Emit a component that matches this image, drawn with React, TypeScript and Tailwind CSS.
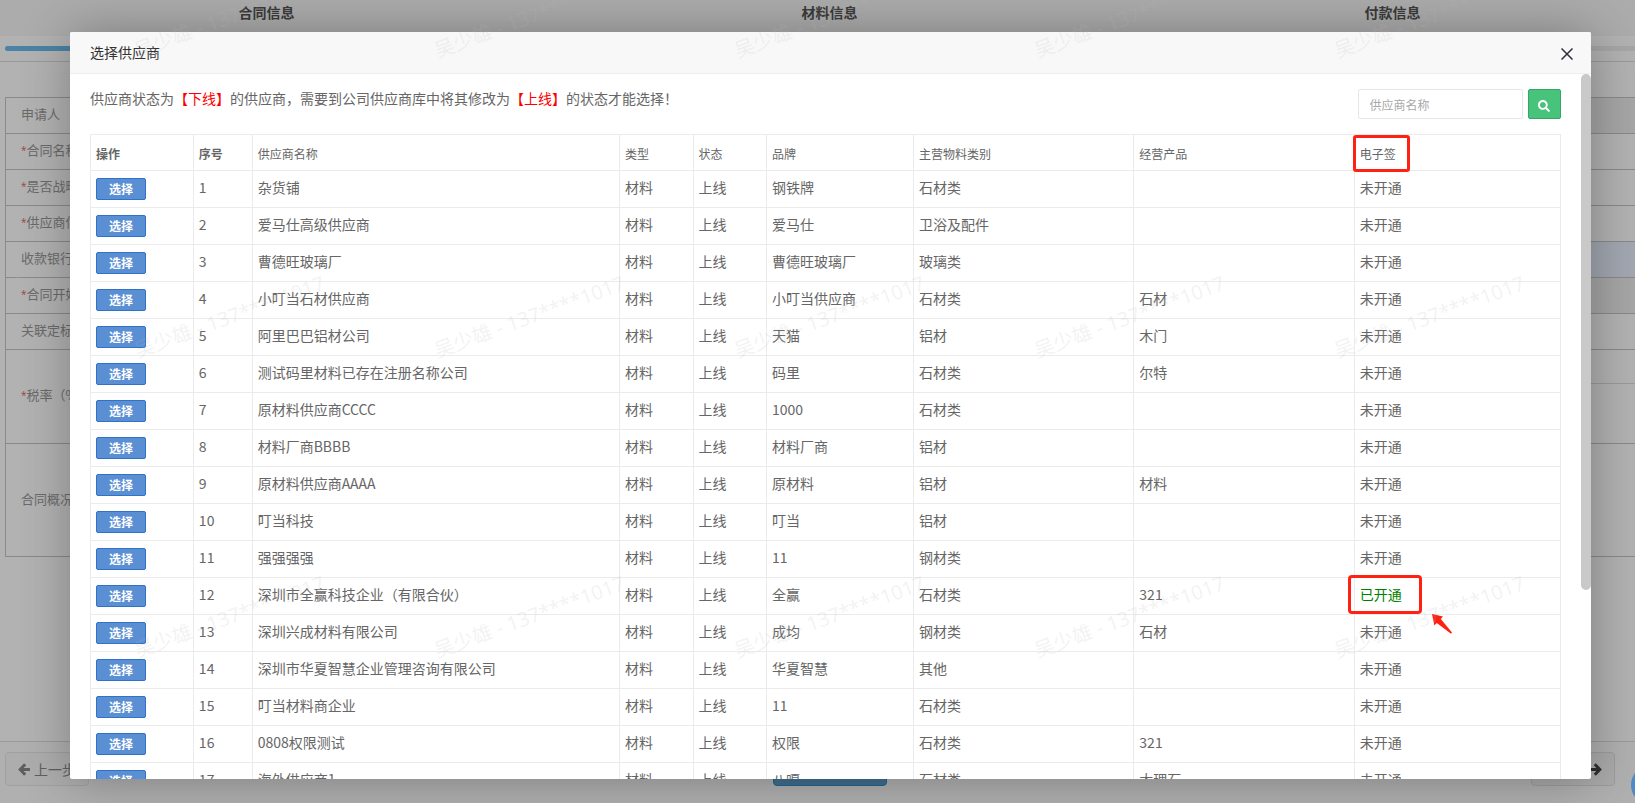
import { FaSearch } from "react-icons/fa";

const steps = ["合同信息", "材料信息", "付款信息"];

const fields = [
    { label: "申请人", required: false, row: "h-[36px]", input: "bg-[#eee]" },
    { label: "合同名称", required: true, row: "h-[36px]", input: "" },
    { label: "是否战略合同", required: true, row: "h-[36px]", input: "" },
    { label: "供应商信息", required: true, row: "h-[36px]", input: "" },
    { label: "收款银行", required: false, row: "h-[36px]", input: "bg-[#e8f0fe]" },
    { label: "合同开始时间", required: true, row: "h-[36px]", input: "bg-[#eee]" },
    { label: "关联定标", required: false, row: "h-[36px]", input: "" },
    { label: "税率（%）", required: true, row: "h-[94px]", input: "border-b border-[#ddd] mb-[59px]" },
    { label: "合同概况", required: false, row: "h-[113px]", input: "" },
];

const columns = [
    { title: "操作", width: "w-[7%]", bold: true },
    { title: "序号", width: "w-[4%]", bold: true },
    { title: "供应商名称", width: "w-[25%]" },
    { title: "类型", width: "w-[5%]" },
    { title: "状态", width: "w-[5%]" },
    { title: "品牌", width: "w-[10%]" },
    { title: "主营物料类别", width: "w-[15%]" },
    { title: "经营产品", width: "w-[15%]" },
    { title: "电子签", width: "w-[14%]", marked: true },
];

const suppliers = [
    { name: "杂货铺", brand: "钢铁牌", category: "石材类", product: "" },
    { name: "爱马仕高级供应商", brand: "爱马仕", category: "卫浴及配件", product: "" },
    { name: "曹德旺玻璃厂", brand: "曹德旺玻璃厂", category: "玻璃类", product: "" },
    { name: "小叮当石材供应商", brand: "小叮当供应商", category: "石材类", product: "石材" },
    { name: "阿里巴巴铝材公司", brand: "天猫", category: "铝材", product: "木门" },
    { name: "测试码里材料已存在注册名称公司", brand: "码里", category: "石材类", product: "尔特" },
    { name: "原材料供应商CCCC", brand: "1000", category: "石材类", product: "" },
    { name: "材料厂商BBBB", brand: "材料厂商", category: "铝材", product: "" },
    { name: "原材料供应商AAAA", brand: "原材料", category: "铝材", product: "材料" },
    { name: "叮当科技", brand: "叮当", category: "铝材", product: "" },
    { name: "强强强强", brand: "11", category: "钢材类", product: "" },
    { name: "深圳市全赢科技企业（有限合伙）", brand: "全赢", category: "石材类", product: "321", signed: true },
    { name: "深圳兴成材料有限公司", brand: "成均", category: "钢材类", product: "石材" },
    { name: "深圳市华夏智慧企业管理咨询有限公司", brand: "华夏智慧", category: "其他", product: "" },
    { name: "叮当材料商企业", brand: "11", category: "石材类", product: "" },
    { name: "0808权限测试", brand: "权限", category: "石材类", product: "321" },
    { name: "海外供应商1", brand: "八嘎", category: "石材类", product: "大理石" },
];

const cell = "border border-[#ebebeb] px-[5px]";
const textCell = cell + " pb-[5px]";

const ArrowIcon = ({ flip }: { flip?: boolean }) => (
    <svg
        className={"h-[13px] w-[12px] " + (flip ? "-scale-x-100" : "")}
        viewBox="0 0 12 13"
        fill="none"
        stroke="currentColor"
        strokeWidth="3"
    >
        <path d="M7.2 1.2 L2.2 6.5 L7.2 11.8 M2.2 6.5 H12" />
    </svg>
);

const ContractPage = () => {
    return (
        <div className="flex h-full flex-col bg-white">
            <div className="h-[62px] shrink-0 overflow-hidden border-b border-[#ddd]">
                <ol className="-ml-[15px] flex w-[103.3%]">
                    {steps.map((step) => (
                        <li
                            key={step}
                            className="w-1/3 bg-[#f7f7f7] pt-[2px] h-9 text-center text-sm font-bold text-[#555]"
                        >
                            {step}
                        </li>
                    ))}
                </ol>
                <div className="ml-[5px] mt-[10px] h-[5px] rounded-l-sm bg-[#eee]">
                    <div className="h-full w-1/3 rounded-sm bg-[#6bbcec]" />
                </div>
            </div>

            <form className="ml-[5px] mt-[35px] border-l border-t border-[#c4c4c4] text-[13px] text-[#999]">
                {fields.map((field) => (
                    <label
                        key={field.label}
                        className={"flex border-b border-[#c4c4c4] " + field.row}
                    >
                        <span className="flex w-[180px] items-center pb-[3px] pl-[15px]">
                            {field.required && (
                                <i className="font-['Open_Sans'] text-[10px] not-italic text-[#d66]">*</i>
                            )}
                            {field.label}
                        </span>
                        <input className={"min-w-0 flex-1 " + field.input} />
                    </label>
                ))}
            </form>

            <div className="mt-auto grid h-[62px] shrink-0 grid-cols-[1fr_114px_1fr] items-start border-t border-[#ddd] bg-[#fcfcfc] pl-[5px] pr-5 pt-[10px] text-sm">
                <button className="flex h-[34px] w-[84px] items-center gap-1 rounded-sm border border-[#e6e6e6] bg-[#f8f8f8] pl-3 whitespace-nowrap text-[#888]">
                    <ArrowIcon />
                    上一步
                </button>
                <button className="ml-5 h-[34px] w-[114px] rounded-sm border border-[#2d8fcf] bg-[#5ca0cd] text-white">
                    保存
                </button>
                <button className="flex h-[34px] w-[84px] items-center justify-end gap-1 justify-self-end rounded-sm border border-[#e0e0e0] bg-[#f4f4f4] pr-3 text-[#444]">
                    下一步
                    <ArrowIcon flip />
                </button>
            </div>
        </div>
    );
};

const SignStatus = ({ signed }: { signed?: boolean }) => {
    if (!signed) return <>未开通</>;

    return (
        <div className="relative text-[#008000]">
            已开通
            <div className="absolute -left-3 -top-[9px] h-[39px] w-[74px] rounded-[4px] border-[3px] border-[#ff2213]" />
            <svg
                className="absolute left-[72px] top-[30px] h-5 w-5"
                viewBox="0 0 20 20"
                fill="#ff2213"
            >
                <path d="M0 0 L11 2.6 L8.8 5 L20 18.4 L19 19.8 L4.8 9 L2.4 11.4 Z" />
            </svg>
        </div>
    );
};

const SupplierTable = () => {
    return (
        <table className="w-full table-fixed border-collapse text-left text-sm text-[#666]">
            <thead>
                <tr className="h-[36px] text-xs">
                    {columns.map((col) => (
                        <th
                            key={col.title}
                            className={`${cell} ${col.width} pt-[3px] ${
                                col.bold ? "font-bold" : "font-normal"
                            }`}
                        >
                            <div className="relative">
                                {col.title}
                                {col.marked && (
                                    <div className="absolute -left-[7px] -top-[11px] h-[37px] w-[57px] rounded-[3px] border-[3px] border-[#ff2213]" />
                                )}
                            </div>
                        </th>
                    ))}
                </tr>
            </thead>
            <tbody>
                {suppliers.map((item, index) => (
                    <tr key={item.name} className="h-[37px]">
                        <td className={cell}>
                            <button className="block h-[22px] w-[50px] rounded-[2px] border border-[#3071c9] bg-[#5b8fd4] text-xs font-bold text-white">
                                选择
                            </button>
                        </td>
                        <td className={textCell}>{index + 1}</td>
                        <td className={textCell}>{item.name}</td>
                        <td className={textCell}>材料</td>
                        <td className={textCell}>上线</td>
                        <td className={textCell}>{item.brand}</td>
                        <td className={textCell}>{item.category}</td>
                        <td className={textCell}>{item.product}</td>
                        <td className={textCell}>
                            <SignStatus signed={item.signed} />
                        </td>
                    </tr>
                ))}
            </tbody>
        </table>
    );
};

const SupplierDialog = () => {
    return (
        <div
            role="dialog"
            aria-label="选择供应商"
            className="ml-[70px] mt-8 flex h-[93%] w-[93%] flex-col rounded-[2px] bg-white shadow-[1px_1px_50px_rgba(0,0,0,0.3)]"
        >
            <div className="flex h-[42px] shrink-0 items-center justify-between rounded-t-[2px] border-b border-[#eee] bg-[#f8f8f8] pl-5 pr-[18px]">
                <h2 className="pb-[2px] text-sm text-[#333]">选择供应商</h2>
                <button aria-label="关闭" className="pt-[3px]">
                    <svg className="h-3 w-3" viewBox="0 0 12 12" stroke="#2e2d3c" strokeWidth="1.5">
                        <path d="M0.5 0.5 L11.5 11.5 M11.5 0.5 L0.5 11.5" />
                    </svg>
                </button>
            </div>

            <div className="flex min-h-0 flex-1">
                <div className="min-w-0 flex-1 overflow-hidden px-5 pt-[15px]">
                    <div className="mb-[15px] flex justify-between">
                        <p className="text-sm leading-[18px] text-[#666]">
                            供应商状态为<span className="text-[#f00]">【下线】</span>
                            的供应商，需要到公司供应商库中将其修改为
                            <span className="text-[#f00]">【上线】</span>的状态才能选择！
                        </p>
                        <div className="flex gap-[5px]">
                            <input
                                aria-label="供应商名称"
                                placeholder="供应商名称"
                                className="h-[30px] w-[165px] rounded-[2px] border border-[#e6e6e6] px-[11px] text-xs placeholder:text-[#a9a9a9]"
                            />
                            <button
                                aria-label="搜索"
                                className="flex h-[30px] w-[33px] items-center justify-center rounded-[2px] border border-[#36a567] bg-[#47c37c] pt-[3px] text-white"
                            >
                                <FaSearch className="text-xs" />
                            </button>
                        </div>
                    </div>
                    <SupplierTable />
                </div>
                <div className="w-[10px]">
                    <div className="h-[73.2%] rounded-full bg-[#c9c9c9]" />
                </div>
            </div>
        </div>
    );
};

const Watermark = () => {
    return (
        <div
            aria-hidden="true"
            className="pointer-events-none absolute -left-[221px] -top-[133px] grid auto-rows-[300px] grid-cols-[repeat(7,300px)]"
        >
            {Array.from({ length: 21 }, (_, i) => (
                <div key={i} className="flex items-center justify-center">
                    <span className="-rotate-20 whitespace-nowrap font-['Noto_Sans','Noto_Sans_CJK_SC',sans-serif] text-xl text-[rgba(184,184,184,0.18)]">
                        吴少雄 - 137****1017
                    </span>
                </div>
            ))}
        </div>
    );
};

const App = () => {
    return (
        <div className="relative h-screen overflow-hidden font-['Noto_Sans_CJK_SC',sans-serif]">
            <ContractPage />
            <div className="absolute inset-0 bg-black/30" />
            {/* help bubble, half off the edge */}
            <button
                aria-label="客服"
                className="absolute -bottom-[2px] -right-9 h-10 w-10 rounded-full bg-[#4f8aca]"
            />
            <div className="absolute inset-0">
                <SupplierDialog />
            </div>
            <Watermark />
        </div>
    );
};

export default App;
